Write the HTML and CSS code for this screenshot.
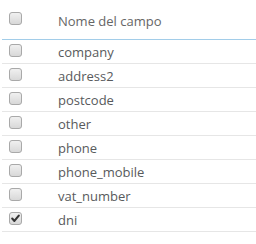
FILE: index.html
```html
<!DOCTYPE html>
<html>
<head>
<meta charset="utf-8">
<link rel="stylesheet" href="styles.css">
</head>
<body>
<table class="fields">
  <thead>
    <tr>
      <th class="c-check"><span class="cb"></span></th>
      <th class="c-name">Nome del campo</th>
    </tr>
  </thead>
  <tbody>
    <tr><td class="c-check"><span class="cb"></span></td><td class="c-name">company</td></tr>
    <tr><td class="c-check"><span class="cb"></span></td><td class="c-name">address2</td></tr>
    <tr><td class="c-check"><span class="cb"></span></td><td class="c-name">postcode</td></tr>
    <tr><td class="c-check"><span class="cb"></span></td><td class="c-name">other</td></tr>
    <tr><td class="c-check"><span class="cb"></span></td><td class="c-name">phone</td></tr>
    <tr><td class="c-check"><span class="cb"></span></td><td class="c-name">phone_mobile</td></tr>
    <tr><td class="c-check"><span class="cb"></span></td><td class="c-name">vat_number</td></tr>
    <tr><td class="c-check"><span class="cb checked"><svg viewBox="0 0 13 13" width="13" height="13"><path d="M3.2 6.6 L5.4 8.9 L9.8 3.6" fill="none" stroke="#333" stroke-width="2.1" stroke-linecap="round" stroke-linejoin="round"/></svg></span></td><td class="c-name">dni</td></tr>
  </tbody>
</table>
</body>
</html>
```
FILE: styles.css
```css
html, body {
  margin: 0;
  padding: 0;
  background: #fff;
}
body {
  font-family: "Open Sans", "Liberation Sans", sans-serif;
  font-size: 13px;
  color: #585a5c;
}
.fields {
  margin-left: 2px;
  width: 254px;
  border-collapse: collapse;
}
.fields th, .fields td {
  padding: 0;
  text-align: left;
  font-weight: normal;
}
.fields thead th {
  height: 37px;
  padding-top: 2px;
  border-bottom: 1px solid #a2cde9;
  color: #666;
}
.fields tbody td {
  height: 23px;
  border-bottom: 1px solid #e6e6e6;
}
.c-check {
  width: 56px;
  padding-left: 7px !important;
  box-sizing: border-box;
}
.cb {
  display: block;
  width: 11px;
  height: 11px;
  border: 1px solid #a9a9a9;
  border-radius: 3px;
  background: linear-gradient(#f0f0f0, #d8d8d8);
  position: relative;
  top: -1px;
}
.fields thead .cb {
  top: -2px;
}
.cb svg {
  position: absolute;
  left: -1px;
  top: -1px;
}
```
